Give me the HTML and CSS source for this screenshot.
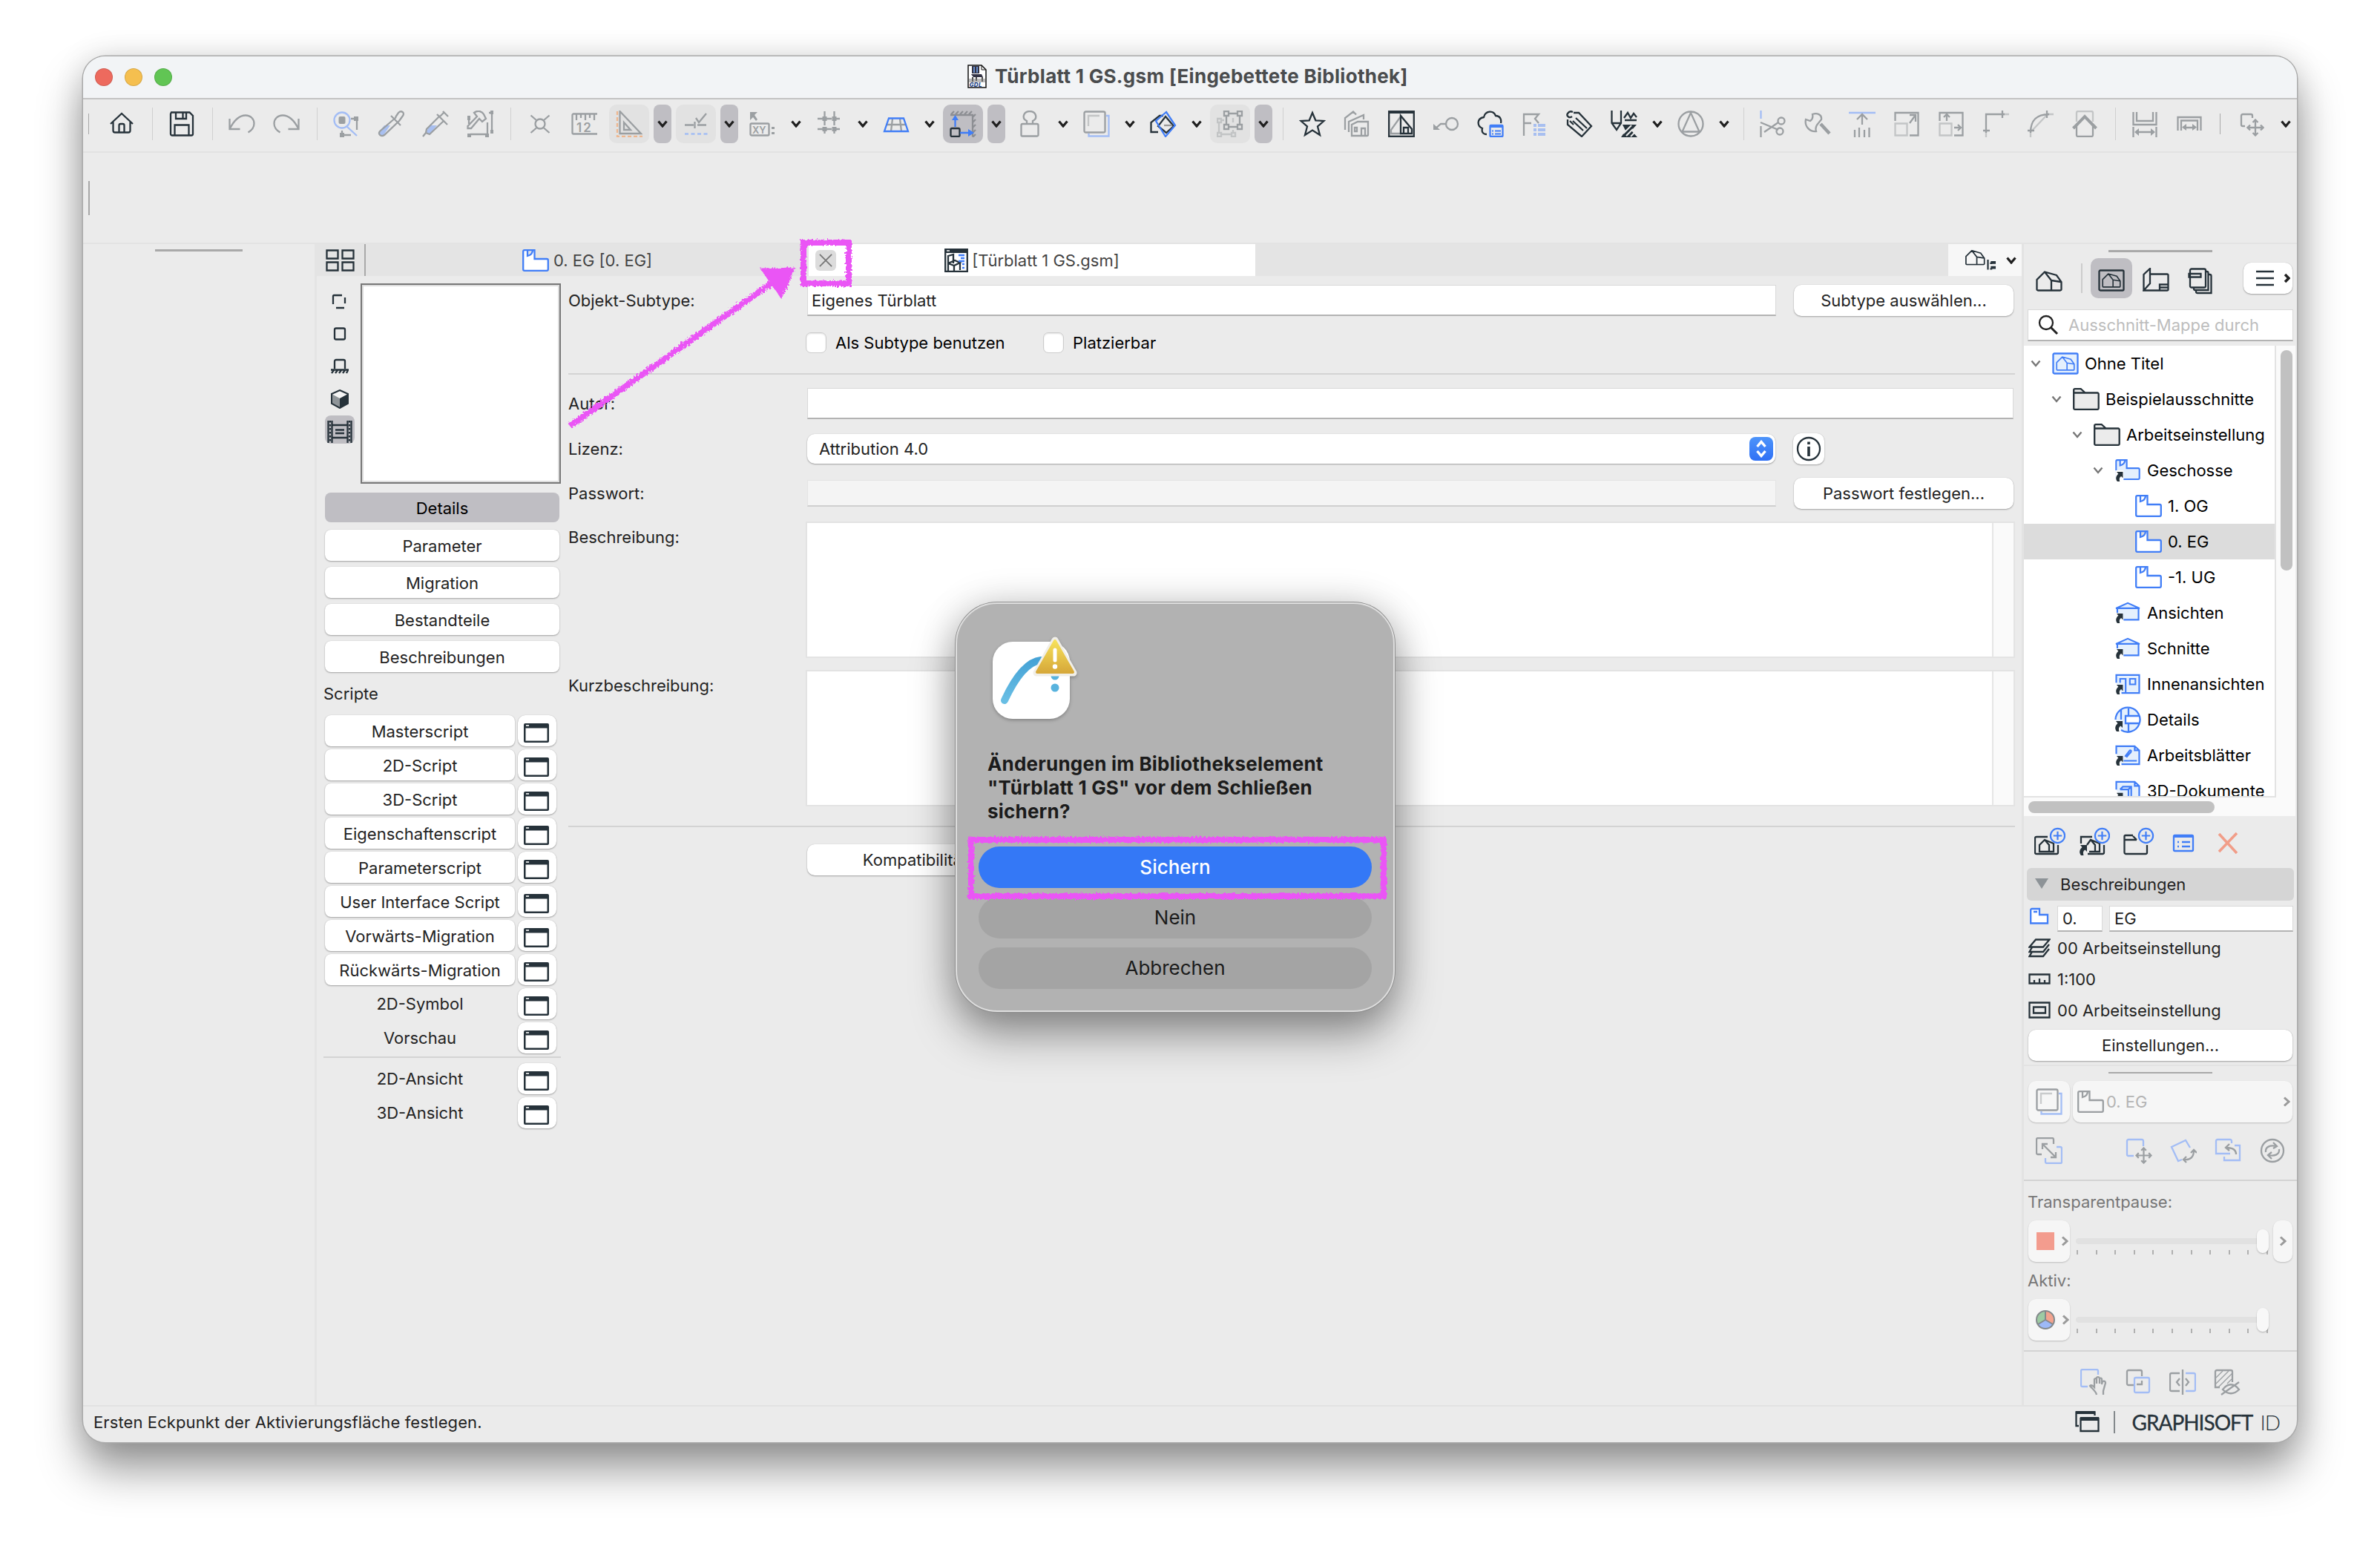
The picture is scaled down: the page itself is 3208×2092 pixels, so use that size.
FILE: index.html
```html
<!DOCTYPE html>
<html lang="de">
<head>
    <meta charset="UTF-8">
    <meta name="viewport" content="width=device-width, initial-scale=1.0">
    <title>Türblatt 1 GS.gsm [Eingebettete Bibliothek]</title>
    <link rel="stylesheet" href="styles.css">
</head>
<body>
    <!-- shared symbols -->
    <svg class="defs">
      <symbol id="down" viewBox="0 0 14 10"><path d="M1.500 1.500L7 8l5.500-6.500"/></symbol>
      <symbol id="win" viewBox="0 0 34 26"><rect class="fd" width="34" height="26" rx="2"/><path d="M2.500 6.500h29V23.500h-29z" fill="#fff"/><path d="M3 2.200h4v1.600H3z" fill="#fff"/></symbol>
      <symbol id="storey" viewBox="0 0 36 30"><path d="M1.200 3a1.800 1.800 0 0 1 1.800-1.800h13.500V13H33a1.800 1.800 0 0 1 1.800 1.800V27a1.800 1.800 0 0 1-1.800 1.800H3A1.800 1.800 0 0 1 1.200 27zM7 1v8c4-1 7-4 7-8"/></symbol>
      <symbol id="house" viewBox="0 0 36 28"><path d="M1.500 12v13a1.500 1.500 0 0 0 1.500 1.500h30a1.500 1.500 0 0 0 1.500-1.500V15L28 6 12 1.500zM12 1.500L21 13v13.500M21 13l13 2"/></symbol>
      <symbol id="link" viewBox="0 0 12 16"><path class="fd" d="M2 1h9v9L8.500 7.500C6 9 5.500 11 6.500 15H3C0 11 1 7 4.500 4z"/></symbol>
      <symbol id="folder" viewBox="0 0 36 30"><path fill="#ebebeb" d="M1.200 6.500h32a1.500 1.500 0 0 1 1.500 1.500v19.300a1.500 1.500 0 0 1-1.500 1.500h-30.500a1.500 1.500 0 0 1-1.500-1.500zM1.200 6.500V2.700a1.500 1.500 0 0 1 1.500-1.500h8l6 5.300"/></symbol>
      <symbol id="plus" viewBox="0 0 24 24"><circle cx="12" cy="12" r="10"/><path d="M12 6v12M6 12h12"/></symbol>
      <symbol id="layers" viewBox="0 0 36 36"><rect x="1.500" y="1.500" width="28" height="28" rx="2"/><path d="M7 21V7h15" opacity=".5"/><path class="lb" d="M31 7h3.500v27.500h-27V31"/></symbol>
      <symbol id="move4" viewBox="0 0 24 24"><path d="M12 2v20M2 12h20M8.500 5L12 1.500 15.500 5M8.500 19l3.500 3.500 3.500-3.500M5 8.500L1.500 12 5 15.500M19 8.500l3.500 3.500-3.500 3.500"/></symbol>
    </svg>

    <div class="window">
      <div class="titlebar">
        <div class="lights"><span class="red"></span><span class="yellow"></span><span class="green"></span></div>
        <div class="title">
          <svg width="26" height="32" viewBox="0 0 26 32"><path d="M1 1h18l6 6v24H1z" fill="#fff" stroke="#111" stroke-width="1.500"/><path d="M19 1v6h6" fill="none" stroke="#111"/><path d="M6 2h10v10H6zM5 13h14l2 4H8z" fill="#334"/><path d="M8 3h2v8H8zM12 3h2v8h-2z" fill="#678cc8"/><path d="M7 17v6M12 17v5M20 17v6" stroke="#111" stroke-width="1.500"/><path d="M2 19h22v5H2z" fill="#777" opacity=".5"/><text x="2.500" y="30" class="gdl">GDL</text></svg>
          <span>Türblatt 1 GS.gsm [Eingebettete Bibliothek]</span>
        </div>
      </div>

      <div class="toolbar">
        <i class="grip"></i>
        <div class="tool"><svg class="ic" viewBox="0 0 36 36"><path d="M3 18L18 4l15 14M6.500 15.500V27A2.500 2.500 0 0 0 9 29.500h18a2.500 2.500 0 0 0 2.500-2.500V15.500M14.500 29.500V20a2 2 0 0 1 2-2h3a2 2 0 0 1 2 2v9.500"/></svg></div>
        <i class="sep"></i>
        <div class="tool"><svg class="ic" viewBox="0 0 36 36"><path d="M4 2.500h24.500L33 7v24.500a2 2 0 0 1-2 2H5a2 2 0 0 1-2-2v-27zM10 3v8h14V3M19.500 3v7M8.500 33V19.500h19V33"/></svg></div>
        <i class="sep"></i>
        <div class="tool"><svg class="ic g" viewBox="0 0 36 36"><path d="M1.500 11v14h14M1.500 25C7 14 14 6.500 23 6.500c7 0 11.500 5 11.500 11 0 5-3 9-8 12"/></svg></div>
        <div class="tool"><svg class="ic g" viewBox="0 0 36 36"><path d="M34.500 11v14h-14M34.500 25C29 14 22 6.500 13 6.500c-7 0-11.500 5-11.500 11 0 5 3 9 8 12"/></svg></div>
        <i class="sep"></i>
        <div class="tool"><svg class="ic g" viewBox="0 0 36 36"><circle class="lb" cx="12" cy="13" r="10.500"/><path class="lb" d="M18 21l14 13"/><rect class="fg" x="7.500" y="8" width="9" height="10" rx="2"/><path d="M32 11v15M12 27v5M15 33h9M24 11h5"/><path class="fg" d="M28 8h6v6h-6zM9 30h6v6H9z"/></svg></div>
        <div class="tool"><svg class="ic g" viewBox="0 0 36 36"><path class="flb" d="M9 20l8 0-9 13c-4 3-8 0-6-4z"/><path d="M25 9L3 28c-3 4 2 8 6 5L29 14M18 7l13 13M24 9l4-6c4-4 9 0 6 4l-5 7"/></svg></div>
        <div class="tool"><svg class="ic g" viewBox="0 0 36 36"><path class="flb" d="M11 20h9L10 32l-5-3z"/><path d="M24 7L6 25l-1 5 5 2 19-18M20 5l14 14M28 1l7 7M24 8l6-6M5 30l-4 5"/></svg></div>
        <div class="tool"><svg class="ic g" viewBox="0 0 36 36"><path d="M10 3c5-4 11-2 13 2l3 6-5 4-4-4L6 24H1.500v-3L14 8zM28 16v16H5M34 4v24M30 3h3M3 10v8"/><path class="fg" d="M1 7h4v6H1zM32 0h4v5h-4zM32 26h4v5h-4zM1 31h5v5H1zM25 31h5v5h-5z"/></svg></div>
        <i class="sep"></i>
        <div class="tool"><svg class="ic g" viewBox="0 0 36 36"><circle cx="18" cy="18" r="6.500"/><path d="M5.500 6.500l8 7M30.500 6.500l-8 7M5.500 30l8-7M30.500 30l-8-7"/></svg></div>
        <div class="tool"><svg class="ic g" viewBox="0 0 36 36"><path d="M35 4.500H3A1.500 1.500 0 0 0 1.500 6v24A1.500 1.500 0 0 0 3 31.500h32M7 5v8M13 5v5M19 5v8M25 5v5M31 5v8"/><text class="t" x="7" y="29">12</text></svg></div>
        <div class="tool on1"><svg class="ic g" viewBox="0 0 36 36"><path d="M5.500 1v30H34zM11 16v10h9z"/><path d="M2 1v34h34" stroke="#eeb78f" stroke-dasharray="5 3"/></svg></div>
        <div class="dd on"><svg class="dn"><use href="#down"/></svg></div>
        <div class="tool on1"><svg class="ic g" viewBox="0 0 36 36"><path d="M3 19.500h12M20 19.500h12M16.500 15v9M18 10l4 6L32 4"/><path class="lb" d="M3 31.500h31" stroke-dasharray="5 3.500"/></svg></div>
        <div class="dd on"><svg class="dn"><use href="#down"/></svg></div>
        <div class="tool"><svg class="ic g" viewBox="0 0 36 36"><path class="fg" d="M1 2h10l-4 4 4 6-2 2-4-5-4 4z"/><rect x="1.500" y="17.500" width="25" height="16" rx="1.500"/><text class="t s" x="4" y="31">XY</text><path class="fg" d="M30 22h4v3h-4zM30 29h4v3h-4z"/></svg></div>
        <div class="dd"><svg class="dn"><use href="#down"/></svg></div>
        <div class="tool"><svg class="ic g" viewBox="0 0 36 36"><path d="M11.500 1v33M24.500 1v33M2 11h33M2 25h33" stroke-dasharray="8 3"/><path class="fg" d="M8.500 8h6v6h-6zM21.500 8h6v6h-6zM8.500 22h6v6h-6zM21.500 22h6v6h-6z"/></svg></div>
        <div class="dd"><svg class="dn"><use href="#down"/></svg></div>
        <div class="tool"><svg class="ic g" viewBox="0 0 36 36"><path d="M13 11l-2 17M23 11l2 17M4 19h28"/><path class="b" d="M8 10.500h20L34 28H2z"/></svg></div>
        <div class="dd"><svg class="dn"><use href="#down"/></svg></div>
        <div class="tool on"><svg class="ic g" viewBox="0 0 36 36"><path d="M2 5l4-4M8 5l4-4M14 5l4-4M20 5l4-4M26 5l4-4M31 9l4-4M31 16l4-4M31 23l4-4M31 30l4-4M31 36l4-4M1 6h30v29" stroke="#8d8f94"/><rect x="1.500" y="24" width="12" height="11" rx="1.500" stroke="#26323a"/><path class="b" d="M7.500 22V10M14 30h13"/><path class="fb" d="M3 13L7.500 6 12 13zM25 25l8 5-8 5z"/></svg></div>
        <div class="dd on"><svg class="dn"><use href="#down"/></svg></div>
        <div class="tool"><svg class="ic g" viewBox="0 0 36 36"><path d="M14 18v-4c-7-3-5-13 4-13s11 10 4 13v4M8 34.500h20a1.500 1.500 0 0 0 1.500-1.500V20a2 2 0 0 0-2-2h-19a2 2 0 0 0-2 2v13A1.500 1.500 0 0 0 8 34.500z"/></svg></div>
        <div class="dd"><svg class="dn"><use href="#down"/></svg></div>
        <div class="tool"><svg class="ic g" viewBox="0 0 36 36"><use href="#layers"/></svg></div>
        <div class="dd"><svg class="dn"><use href="#down"/></svg></div>
        <div class="tool"><svg class="ic" viewBox="0 0 36 36"><path d="M11 29H1.500V16L13 7h5M21 8l11 13-10 9-11-9z"/><path d="M19 20h11" stroke="#999"/><path class="b" d="M22 2L8 14l13 21 13-15z"/></svg></div>
        <div class="dd"><svg class="dn"><use href="#down"/></svg></div>
        <div class="tool on1"><svg class="ic g" viewBox="0 0 36 36"><path d="M10 1h6v6h-6zM28 1h6v6h-6zM10 19h6v6h-6zM28 19h6v6h-6zM16 4h12M16 22h12M13 7v12M31 7v12"/><path d="M1 11h5v5H1zM1 30h5v5H1zM20 30h5v5h-5zM6 32h14M3 16v14M22 10v6M22 26v4M6 13h4" opacity=".45"/></svg></div>
        <div class="dd on"><svg class="dn"><use href="#down"/></svg></div>
        <i class="sep"></i>
        <div class="tool"><svg class="ic" viewBox="0 0 36 36"><path d="M18 3l4.300 10.300L33.500 14l-8.500 7.500 3 11.500-10-6.500L8 33l3-11.500L2.500 14l11.200-.7z"/></svg></div>
        <div class="tool"><svg class="ic g" viewBox="0 0 36 36"><path d="M2 26V10L13 1.500l4 4M7 29V15l20-9v6M11 33V19l8-4h14v17.500a1.500 1.500 0 0 1-1.500 1.500H11zM24 34V24h5v10M15 23h3v5h-3z"/></svg></div>
        <div class="tool"><svg class="ic" viewBox="0 0 36 36"><rect x="1.200" y="1.200" width="33.600" height="33.600"/><path class="fd" d="M1 1h34v3H1z"/><path d="M17 8L4 26v5h13" stroke="#9b9fa2"/><path d="M17 31V7l15 18v6zM21 31v-8h6v8"/></svg></div>
        <div class="tool"><svg class="ic g" viewBox="0 0 36 36"><circle cx="26" cy="18" r="8"/><path d="M18 18h-7l-8 7"/><path class="fg" d="M1 18v8h9z"/></svg></div>
        <div class="tool"><svg class="ic" viewBox="0 0 36 36"><path d="M13 32c-6 0-7-4-6-8-7-3-8-13 2-15C11 0 22-1 25 7c6 0 8 5 7 10"/><rect class="b" x="17.500" y="20" width="17" height="15" rx="1"/><path class="fb" d="M17 19h18v4H17z"/><path class="b" d="M20 27.500h2M24 27.500h8M20 31.500h2M24 31.500h8" stroke-width="1.800"/></svg></div>
        <div class="tool"><svg class="ic g" viewBox="0 0 36 36"><path d="M3 34V5h20l-5 6 5 6M3 17h10"/><path class="flb" d="M16 18h4v4h-4zM22 18h10v4H22zM16 24h4v4h-4zM22 24h10v4H22zM16 30h4v4h-4zM22 30h10v4H22z"/></svg></div>
        <div class="tool"><svg class="ic" viewBox="0 0 36 36"><path d="M2 12v7l19 16 13-14L17 3h-7M8 8c-4 3-8-1-6-4s5-3 7-2M13 10l15 14M9 14l14 13M5 14l5 5"/></svg></div>
        <div class="tool"><svg class="ic" viewBox="0 0 36 36"><path d="M1.500 0v17L8 26l6-9V0M1.500 17H14M18 10l5-7 4 7 4-6 4 5M19 13h16"/><path class="fd" d="M16 19h19l-7 8 8 9H14l6-9z"/><path d="M17 31l11-11M21 34l9-9M27 35l5-5" stroke="#ebebeb" stroke-width="2"/></svg></div>
        <div class="dd"><svg class="dn"><use href="#down"/></svg></div>
        <div class="tool"><svg class="ic g" viewBox="0 0 36 36"><circle cx="18" cy="18" r="16.500"/><path d="M18 3L6.500 28.500h23z"/></svg></div>
        <div class="dd"><svg class="dn"><use href="#down"/></svg></div>
        <i class="sep"></i>
        <div class="tool"><svg class="ic g" viewBox="0 0 36 36"><path class="lb" d="M1.500 0v11"/><path d="M1.500 21v15M1 16l24 10M6 29l19-13"/><circle cx="29" cy="14" r="4.500"/><circle cx="27" cy="28" r="4.500"/></svg></div>
        <div class="tool"><svg class="ic g" viewBox="0 0 36 36"><path d="M11 5c6-2 13 0 12 7l-4 5c-4 4-4 8-3 11C8 29 0 22 2 12l6 2c3-2 4-5 3-9z"/><path d="M22 18l12 13" stroke-width="4.500"/></svg></div>
        <div class="tool"><svg class="ic g" viewBox="0 0 36 36"><path class="lb" d="M0 3h36"/><path d="M18 19V5M11 12l7-7 7 7M8 26v10M14 23v13M21 26v10M27.500 23v13"/></svg></div>
        <div class="tool"><svg class="ic g" viewBox="0 0 36 36"><path d="M2.500 14V3h31v30.500H22M22 17l8-11M22 6h8v9"/><path d="M2.500 17.500h16v16h-16z" opacity=".5"/></svg></div>
        <div class="tool"><svg class="ic g" viewBox="0 0 36 36"><path d="M2.500 14V3h31v30.500H22M12 14V5M8 9l4-4 4 4M22 23h9M27 19l4 4-4 4"/><path d="M2.500 17.500h16v16h-16z" opacity=".5"/></svg></div>
        <div class="tool"><svg class="ic g" viewBox="0 0 36 36"><path d="M5 30V5h25M1 27h9M27 0v10"/><path d="M5 28v8M28 5h8" opacity=".5"/></svg></div>
        <div class="tool"><svg class="ic g" viewBox="0 0 36 36"><path d="M5 30C5 14 12 5 30 5M1 27h9M27 0v10"/><path d="M5 28v8M28 5h8M7 27L27 6" opacity=".5"/></svg></div>
        <div class="tool"><svg class="ic g" viewBox="0 0 36 36"><path d="M7 15V3a2 2 0 0 1 2-2h18a2 2 0 0 1 2 2v12" opacity=".5"/><path d="M7 20v13a2 2 0 0 0 2 2h18a2 2 0 0 0 2-2V20"/><path d="M2.500 24L18 8l15.500 16" stroke-width="4"/></svg></div>
        <i class="sep"></i>
        <div class="tool"><svg class="ic g" viewBox="0 0 36 36"><path d="M2.500 2v17h31V2M7 2v12h22V2M2.500 22v14M33.500 22v14M6 29h24"/><path class="fg" d="M10 24v10l-6-5zM26 24v10l6-5z"/></svg></div>
        <div class="tool"><svg class="ic g" viewBox="0 0 36 36"><path d="M2.500 27V9h31v18M7 27V13.500h22V27M10 23h16"/><path class="fg" d="M14 18v9l-6-4.500zM22 18v9l6-4.500z"/></svg></div>
        <i class="grip last"></i>
        <div class="tool"><svg class="ic g" viewBox="0 0 36 36"><path d="M18 10V7a2 2 0 0 0-2-2H5a2 2 0 0 0-2 2v12a2 2 0 0 0 2 2h3"/><use href="#move4" x="10" y="11" width="24" height="24"/></svg></div>
        <div class="dd"><svg class="dn"><use href="#down"/></svg></div>
      </div>
      <div class="infobar"><i></i></div>

      <div class="main">
        <div class="toolbox"><i class="handle"></i></div>

        <div class="editor">
          <div class="tabs">
            <div class="tab-grid"><svg class="ic" viewBox="0 0 40 30"><path d="M1.500 1.500h15v11h-15zM22.500 1.500h15v11h-15zM1.500 17.500h15v11h-15zM22.500 17.500h15v11h-15z"/></svg></div>
            <div class="tab"><svg class="ic b storey"><use href="#storey"/></svg>0. EG [0. EG]</div>
            <div class="tab active">
              <span class="close"><svg class="ic" viewBox="0 0 20 20"><path d="M1 1l18 18M19 1L1 19"/></svg></span>
              <svg class="ic gsm" viewBox="0 0 32 32"><path d="M1.200 1.200h29.600v29.600H1.200z"/><path class="fd" d="M1 1h30v5H1z"/><path d="M3 3h4" stroke="#fff" stroke-width="1.500"/><path d="M5 30V10l7-2v12M5 20l8 3 8-4-7-3-9 4M13 23v7M21 19v10"/><path class="b" d="M19 9h8M22 13h5M19 17h8M24 21h3M24 26h3"/></svg>[Türblatt 1 GS.gsm]
            </div>
            <div class="tab-nav"><svg class="ic" viewBox="0 0 46 30"><use href="#house" x="1" y="0" width="30" height="22"/><path d="M34 14v14M37 19h3M37 27h3"/><path class="fd" d="M38 16h7v4h-7zM38 23h7v4h-7z"/></svg><svg class="dn"><use href="#down"/></svg></div>
          </div>

          <div class="editor-body">
            <div class="side">
              <div class="preview-row">
                <div class="modes">
                  <span><svg class="ic" viewBox="0 0 26 22"><path d="M4 15V4a1 1 0 0 1 1-1h11M20 6v8M8 20h11"/></svg></span>
                  <span><svg class="ic" viewBox="0 0 26 22"><rect x="6" y="3.500" width="14" height="15" rx="2"/></svg></span>
                  <span><svg class="ic" viewBox="0 0 26 22"><path d="M6 14V4a2 2 0 0 1 2-2h10a2 2 0 0 1 2 2v10M1 15.500h24M5 16l-3 4M10 16l-3 4M15 16l-3 4M20 16l-3 4M24 16l-2 4"/></svg></span>
                  <span><svg viewBox="0 0 26 26"><path fill="#f4f4f4" d="M13 1l11 5-11 6L2 6z"/><path fill="#8f9599" d="M2 6l11 6v13L2 19z"/><path fill="#26323a" d="M24 6v13l-11 6V12z"/><path fill="none" stroke="#26323a" stroke-width="2" d="M13 1l11 5v13l-11 6-11-6V6z"/></svg></span>
                  <span class="sel"><svg class="ic" viewBox="0 0 34 32"><path d="M1.500 1v30M6.500 1v30M27.500 1v30M32.500 1v30M6 7h22M6 24h22M11 13.500h12M11 18h12"/><path d="M4 1v30M30 1v30" stroke-dasharray="2.500 2.500"/></svg></span>
                </div>
                <div class="preview"></div>
              </div>
              <div class="btn big sel">Details</div>
              <div class="btn big">Parameter</div>
              <div class="btn big">Migration</div>
              <div class="btn big">Bestandteile</div>
              <div class="btn big">Beschreibungen</div>
              <div class="heading">Scripte</div>
              <div class="script"><div class="btn">Masterscript</div><div class="btn w"><svg><use href="#win"/></svg></div></div>
              <div class="script"><div class="btn">2D-Script</div><div class="btn w"><svg><use href="#win"/></svg></div></div>
              <div class="script"><div class="btn">3D-Script</div><div class="btn w"><svg><use href="#win"/></svg></div></div>
              <div class="script"><div class="btn">Eigenschaftenscript</div><div class="btn w"><svg><use href="#win"/></svg></div></div>
              <div class="script"><div class="btn">Parameterscript</div><div class="btn w"><svg><use href="#win"/></svg></div></div>
              <div class="script"><div class="btn">User Interface Script</div><div class="btn w"><svg><use href="#win"/></svg></div></div>
              <div class="script"><div class="btn">Vorwärts-Migration</div><div class="btn w"><svg><use href="#win"/></svg></div></div>
              <div class="script"><div class="btn">Rückwärts-Migration</div><div class="btn w"><svg><use href="#win"/></svg></div></div>
              <div class="script"><div class="plain">2D-Symbol</div><div class="btn w"><svg><use href="#win"/></svg></div></div>
              <div class="script"><div class="plain">Vorschau</div><div class="btn w"><svg><use href="#win"/></svg></div></div>
              <div class="line"></div>
              <div class="script"><div class="plain">2D-Ansicht</div><div class="btn w"><svg><use href="#win"/></svg></div></div>
              <div class="script"><div class="plain">3D-Ansicht</div><div class="btn w"><svg><use href="#win"/></svg></div></div>
            </div>

            <div class="form">
              <div class="row r1"><label>Objekt-Subtype:</label><div class="field">Eigenes Türblatt</div><div class="btn">Subtype auswählen...</div></div>
              <div class="checks"><span class="cb"></span><span class="cbt first">Als Subtype benutzen</span><span class="cb"></span><span class="cbt">Platzierbar</span></div>
              <div class="line"></div>
              <div class="row r2"><label>Autor:</label><div class="field full"></div></div>
              <div class="row r3"><label>Lizenz:</label><div class="btn select">Attribution 4.0<span class="stepper"><svg viewBox="0 0 16 24"><path d="M2.500 9L8 2.500 13.500 9M2.500 15L8 21.500l5.500-6.500"/></svg></span></div><div class="btn info"><svg class="ic" viewBox="0 0 34 34"><circle cx="17" cy="17" r="15"/><path d="M17 14v13M17 7.500v3.500" stroke-width="3.600"/></svg></div></div>
              <div class="row r4"><label>Passwort:</label><div class="field off"></div><div class="btn">Passwort festlegen...</div></div>
              <div class="row r5"><label>Beschreibung:</label><div class="area"><i></i></div></div>
              <div class="row r6"><label>Kurzbeschreibung:</label><div class="area"><i></i></div></div>
              <div class="line low"></div>
              <div class="btn compat">Kompatibilität...</div>
            </div>
          </div>
        </div>

        <div class="nav">
          <i class="handle"></i>
          <div class="nav-tabs">
            <svg class="ic n1"><use href="#house"/></svg>
            <i></i>
            <span class="sel"><svg class="ic" viewBox="0 0 36 30"><rect x="1.500" y="1.500" width="33" height="27" rx="1.500"/><use href="#house" x="4" y="5" width="28" height="20"/></svg></span>
            <svg class="ic n2" viewBox="0 0 36 32"><path d="M1.500 30V9L10 1v20L1.500 30.500H33a1.500 1.500 0 0 0 1.500-1.500V10A1.500 1.500 0 0 0 33 8.500H11M34 22.500H23V30M24 26.500h10"/></svg>
            <svg class="ic n3" viewBox="0 0 34 36"><rect x="3" y="1.500" width="21" height="25" rx="2"/><path d="M1.500 8h16v4.500h-16zM24 5h1.500a2 2 0 0 1 2 2v23H10a2 2 0 0 1-2-2v-1M28 9h1.500a2 2 0 0 1 2 2v23H13a2 2 0 0 1-2-2v-1"/></svg>
            <div class="btn menu"><svg class="ic" viewBox="0 0 46 22"><path d="M0 2h24M0 11h24M0 20h24"/><path d="M39 6l5 5-5 5" stroke-width="3.500" stroke="#222"/></svg></div>
          </div>
          <div class="search"><svg class="ic" viewBox="0 0 28 28"><circle cx="11" cy="11" r="9"/><path d="M17.500 17.500L26 26" stroke-width="3"/></svg><span>Ausschnitt-Mappe durch</span></div>

          <div class="tree-wrap">
            <div class="tree">
              <div class="item"><svg class="cv"><use href="#down"/></svg><svg class="ic b" viewBox="0 0 36 30"><rect x="1.500" y="1.500" width="33" height="27" rx="1.500" fill="#e5f0fd"/><use href="#house" x="4" y="5" width="28" height="20"/></svg>Ohne Titel</div>
              <div class="item l1"><svg class="cv"><use href="#down"/></svg><svg class="ic"><use href="#folder"/></svg>Beispielausschnitte</div>
              <div class="item l2"><svg class="cv"><use href="#down"/></svg><svg class="ic"><use href="#folder"/></svg>Arbeitseinstellung</div>
              <div class="item l3"><svg class="cv"><use href="#down"/></svg><svg class="ic b pale" viewBox="0 0 36 32"><use href="#storey" width="36" height="30"/><path d="M0 16h12v16H0z" stroke="none" fill="#fff"/><use href="#link" y="17" width="12" height="16"/></svg>Geschosse</div>
              <div class="item l4"><svg class="ic b"><use href="#storey"/></svg>1. OG</div>
              <div class="item l4 sel"><svg class="ic b wh"><use href="#storey"/></svg>0. EG</div>
              <div class="item l4"><svg class="ic b"><use href="#storey"/></svg>-1. UG</div>
              <div class="item l3x"><svg class="ic b pale" viewBox="0 0 36 32"><path d="M3 16V9.500h30.500V26H12M1 9.500L18 2l17 7.500z"/><use href="#link" y="16" width="12" height="16"/></svg>Ansichten</div>
              <div class="item l3x"><svg class="ic b pale" viewBox="0 0 36 32"><path d="M3 16V9.500h30.500V26H12M1 9.500L18 2l17 7.500z"/><use href="#link" y="16" width="12" height="16"/></svg>Schnitte</div>
              <div class="item l3x"><svg class="ic b pale" viewBox="0 0 36 32"><path d="M1.500 14V3h33v26H9M7 14V8.500h8V29M21 8.500h8v8h-8z"/><use href="#link" y="16" width="12" height="16"/></svg>Innenansichten</div>
              <div class="item l3x"><svg class="ic b pale det" viewBox="0 0 36 36"><path d="M1.500 18A16.500 16.500 0 1 1 9 32M19 2v11M19 23v12M34 13H15v10h19M9 5v13"/><use href="#link" y="19" width="12" height="16"/></svg>Details</div>
              <div class="item l3x"><svg class="ic b pale" viewBox="0 0 36 32"><path d="M1.500 14V3H28l6.500 6v20H9M28 3v6h6.500M12 24h19M14 18l7-9c3-1 2 3 0 4l-5 6"/><use href="#link" y="16" width="12" height="16"/></svg>Arbeitsblätter</div>
              <div class="item l3x"><svg class="ic b pale" viewBox="0 0 36 32"><path d="M1.500 14V3H28l6.500 6v20H9M28 3v6h6.500M7 14h12v15M7 14l4-4h12v16M19 14l4-4"/><use href="#link" y="18" width="12" height="16"/></svg>3D-Dokumente</div>
            </div>
            <div class="vscroll"><i></i></div>
          </div>
          <div class="hscroll"><i></i></div>

          <div class="actions">
            <span><svg class="ic" viewBox="0 0 42 38"><path d="M18 13H3a2 2 0 0 0-2 2v19a2 2 0 0 0 2 2h27a2 2 0 0 0 2-2V24"/><path d="M7 33V24l7-7 12 5v11zM14 17l6 7v9"/><use class="b" href="#plus" x="20" y="0" width="23" height="23"/></svg></span>
            <span><svg class="ic" viewBox="0 0 42 38"><path d="M18 13H3v9M12 36h20a2 2 0 0 0 2-2V24"/><path d="M11 24l5-7 12 5v11H14M16 17l6 7v9"/><use href="#link" y="23" width="12" height="16"/><use class="b" href="#plus" x="20" y="0" width="23" height="23"/></svg></span>
            <span><svg class="ic" viewBox="0 0 42 38"><path d="M18 17H1.500M13 12l5 5M13 11H3a1.500 1.500 0 0 0-1.500 1.500V34A2 2 0 0 0 3 36h27a2 2 0 0 0 2-2V24"/><use class="b" href="#plus" x="19" y="0" width="23" height="23"/></svg></span>
            <span><svg class="ic b" viewBox="0 0 42 38"><rect x="8" y="11" width="26" height="21" rx="1.500"/><path class="fb" d="M8 10h26v4H8z"/><path d="M13 20h2M19 20h11M13 26h2M19 26h11"/></svg></span>
            <span><svg class="ic" viewBox="0 0 42 38"><path d="M9 9l24 26M33 8L9 33" stroke="#f19d88" stroke-width="3.500"/></svg></span>
          </div>

          <div class="section"><b></b>Beschreibungen</div>
          <div class="idrow"><svg class="ic b" viewBox="0 0 26 22"><path fill="#fff" d="M1.200 2.500a1.500 1.500 0 0 1 1.500-1.500H13v8h11v11.500H1.200zM5 5h5"/></svg><div class="field num">0.</div><div class="field">EG</div></div>
          <div class="prop"><svg class="ic" viewBox="0 0 30 26"><path d="M10 1.500h18.500l-8.500 10H1.500zM5 12l-3.500 6H20l8-10M5 18l-3.500 6H20l8-10"/></svg>00 Arbeitseinstellung</div>
          <div class="prop"><svg class="ic" viewBox="0 0 30 26"><path d="M1.500 6.500h27v12h-27zM8 18v-4M15 18v-6M22 18v-4"/></svg>1:100</div>
          <div class="prop"><svg class="ic" viewBox="0 0 30 26"><path d="M1.500 2.500h27v20h-27zM7 8.500h16v8H7z"/></svg>00 Arbeitseinstellung</div>
          <div class="btn settings">Einstellungen...</div>

          <div class="trace">
            <i class="handle"></i>
            <div class="ref"><div class="btn off"><svg class="ic g"><use href="#layers"/></svg></div><div class="btn off wide"><svg class="ic g st"><use href="#storey"/></svg>0. EG<svg class="rt" viewBox="0 0 10 14"><path d="M2 1.500L8 7l-6 5.500"/></svg></div></div>
            <div class="icons">
              <svg class="ic g" viewBox="0 0 36 36"><path d="M8 23H3a2 2 0 0 1-2-2V3a2 2 0 0 1 2-2h19a2 2 0 0 1 2 2v6M9 9l18 18M9 16V9h7M20 27h7v-7"/><path class="lb" d="M28 13h5a2 2 0 0 1 2 2v18a2 2 0 0 1-2 2H15a2 2 0 0 1-2-2v-5"/></svg>
              <i></i>
              <svg class="ic g" viewBox="0 0 36 36"><path class="lb" d="M24 12V5a2 2 0 0 0-2-2H4a2 2 0 0 0-2 2v18a2 2 0 0 0 2 2h7"/><use href="#move4" x="13" y="13" width="23" height="23"/></svg>
              <svg class="ic g" viewBox="0 0 36 36"><path class="lb" d="M27 14l-6-10L2 13l9 19 5-2"/><path d="M19 30c9 1 13-4 13-12M28 21l4-4 4 4M22 26l-4 4 4 4"/></svg>
              <svg class="ic g" viewBox="0 0 36 36"><path class="lb" d="M23 8V5a2 2 0 0 0-2-2H4a2 2 0 0 0-2 2v17h19M27 11h7v20H13v-5"/><path d="M29 23c0-7-6-9-13-9M20 9l-5 5 5 4"/></svg>
              <svg class="ic g" viewBox="0 0 36 36"><circle cx="18" cy="18" r="15"/><path d="M9 20c-1-7 6-10 14-8M19 7l5 5-5 3M27 16c1 7-6 10-14 8M17 20l-5 4 5 5"/></svg>
            </div>
            <div class="line"></div>
            <div class="cap">Transparentpause:</div>
            <div class="slide"><div class="btn off"><b class="sw"></b><svg class="rt" viewBox="0 0 10 14"><path d="M2 1.500L8 7l-6 5.500"/></svg></div><div class="slider"><div class="track"></div><div class="ticks"><i></i><i></i><i></i><i></i><i></i><i></i><i></i><i></i><i></i><i></i><i></i></div><div class="knob"></div></div><div class="btn off nar"><svg class="rt" viewBox="0 0 10 14"><path d="M2 1.500L8 7l-6 5.500"/></svg></div></div>
            <div class="cap c2">Aktiv:</div>
            <div class="slide"><div class="btn off"><svg class="pie" viewBox="0 0 26 26"><path fill="#f3a38e" d="M13 13V1a12 12 0 0 1 10.400 18z"/><path fill="#9dcba3" d="M13 13V1A12 12 0 0 0 2.600 19z"/><path fill="#9db9f7" d="M13 13L2.600 19a12 12 0 0 0 20.800 0z"/><path d="M13 1v12M13 13l10 6M13 13L3 19" stroke="#84898c" stroke-width="2"/><circle cx="13" cy="13" r="12" fill="none" stroke="#84898c" stroke-width="2"/></svg><svg class="rt" viewBox="0 0 10 14"><path d="M2 1.500L8 7l-6 5.500"/></svg></div><div class="slider"><div class="track"></div><div class="ticks"><i></i><i></i><i></i><i></i><i></i><i></i><i></i><i></i><i></i><i></i><i></i></div><div class="knob"></div></div></div>
            <div class="line l2"></div>
            <div class="icons bottom">
              <svg class="ic g" viewBox="0 0 36 36"><path class="lb" d="M24 8V3a2 2 0 0 0-2-2H3a2 2 0 0 0-2 2v19a2 2 0 0 0 2 2h7"/><path d="M22 35c-1-5-6-8-9-12 2-2 4 0 6 2V14c2-2 3 0 3 1v5-8c2-2 4 0 4 1v7-7c2-1 3 0 3 1v7l1-4c2-1 4 0 4 2l-3 11v5"/></svg>
              <svg class="ic g" viewBox="0 0 36 36"><path d="M14 22H5a2 2 0 0 1-2-2V4a2 2 0 0 1 2-2h16a2 2 0 0 1 2 2v6M23 16v5h-7"/><rect class="lb" x="13" y="12" width="20" height="20" rx="2"/></svg>
              <svg class="ic g" viewBox="0 0 36 36"><path d="M18 1v34M14 6H3a2 2 0 0 0-2 2v20a2 2 0 0 0 2 2h11M14 13l-4 5 4 5M22 13l4 5-4 5"/><path class="lb" d="M22 6h11a2 2 0 0 1 2 2v20a2 2 0 0 1-2 2H22"/></svg>
              <svg class="ic g" viewBox="0 0 36 36"><path d="M25 18V4a2 2 0 0 0-2-2H4a2 2 0 0 0-2 2v21h6M12 28c7-9 15-9 22 0-7 7-15 7-22 0zM10 35l24-17"/><path d="M3 12L12 3M3 20L20 3M6 25L25 6M18 20l6-6" stroke-width="1.300"/></svg>
            </div>
          </div>
        </div>
      </div>

      <div class="status">
        <span>Ersten Eckpunkt der Aktivierungsfläche festlegen.</span>
        <div class="brand"><svg class="ic" viewBox="0 0 34 30"><path d="M5 20H1.500V1.500h25V6M7.500 10h24v17h-24z"/><path class="fd" d="M1 0h26v4H1zM7 8h25v5H7z"/></svg><i></i><b>GRAPHISOFT</b><em>ID</em></div>
      </div>

      <div class="dialog">
        <svg class="appicon" viewBox="0 0 118 116">
          <defs>
            <linearGradient id="warn" x1="0" y1="0" x2="0" y2="1"><stop offset="0" stop-color="#f6e05a"/><stop offset="1" stop-color="#d7a93a"/></linearGradient>
            <linearGradient id="arc" x1="0" y1="0" x2="0" y2="1"><stop offset="0" stop-color="#46a3d6"/><stop offset="1" stop-color="#68bee4"/></linearGradient>
          </defs>
          <rect x="1" y="7" width="104" height="104" rx="27" fill="#fff"/>
          <path d="M17 86C30 58 46 34 66 32" fill="none" stroke="url(#arc)" stroke-width="10" stroke-linecap="round"/>
          <circle cx="85" cy="53" r="5.500" fill="#58b3de"/><circle cx="85" cy="69" r="5.500" fill="#58b3de"/>
          <path d="M85 5L110 49H60z" fill="url(#warn)" stroke="#f1efe9" stroke-width="9" stroke-linejoin="round"/>
          <path d="M85 6L109 48H61z" fill="url(#warn)" stroke="url(#warn)" stroke-width="4" stroke-linejoin="round"/>
          <path d="M85 18v14" stroke="#fff" stroke-width="5" stroke-linecap="round"/><circle cx="85" cy="40.500" r="3.200" fill="#fff"/>
        </svg>
        <p>Änderungen im Bibliothekselement<br>"Türblatt 1 GS" vor dem Schließen<br>sichern?</p>
        <div class="dbtn primary">Sichern</div>
        <div class="dbtn">Nein</div>
        <div class="dbtn">Abbrechen</div>
      </div>
    </div>

    <!-- crayon marks over the window -->
    <svg class="marks" viewBox="0 0 3208 2092">
      <filter id="crayon" x="-5%" y="-5%" width="110%" height="110%"><feTurbulence type="fractalNoise" baseFrequency=".35" numOctaves="2" result="n"/><feDisplacementMap in="SourceGraphic" in2="n" scale="6"/></filter>
      <g filter="url(#crayon)">
        <rect x="1083" y="327" width="61" height="55"/>
        <rect x="1309" y="1132" width="556" height="76"/>
        <path d="M768 574L1048 376"/>
        <path class="head" d="M1027 363l43-1-17 38z"/>
      </g>
    </svg>
</body>
</html>
```
FILE: styles.css
```css
* {
  box-sizing: border-box;
}

body {
  margin: 0;
  width: 3208px;
  height: 2092px;
  overflow: hidden;
  background: #fff;
  font-family: Inter, "Liberation Sans", sans-serif;
  font-size: 22px;
  color: #232323;
  padding: 76px 112px 0;
}

.defs {
  position: absolute;
  width: 0;
  height: 0;
}

.window {
  position: relative;
  display: flex;
  flex-direction: column;
  width: 2984px;
  height: 1868px;
  background: #ebebeb;
  border-radius: 30px;
  box-shadow: 0 0 0 1.5px #aaa, 0 36px 60px rgba(0, 0, 0, 0.42), 0 0 40px rgba(0, 0, 0, 0.12);
}

/* icons */
.ic {
  fill: none;
  stroke: #26323a;
  stroke-width: 2.3;
  width: 36px;
  height: 36px;
  flex: none;
}
.g { stroke: #9b9fa2; }
.b { stroke: #417ef7; }
.lb { stroke: #a3bdf5; }
.fd { fill: #26323a; stroke: none; }
.fg { fill: #9b9fa2; stroke: none; }
.fb { fill: #417ef7; stroke: none; }
.flb { fill: #a8bff0; stroke: none; }
.t { fill: #9b9fa2; stroke: none; font-size: 17px; letter-spacing: 2px; font-weight: 600; }
.t.s { font-size: 13px; letter-spacing: 0; }
.gdl { font-size: 8px; font-weight: 800; font-style: italic; fill: #1d4487; }

.dn {
  width: 14px;
  height: 10px;
  fill: none;
  stroke: #1f1f1f;
  stroke-width: 3.2;
}

/* title bar */
.titlebar {
  display: flex;
  align-items: center;
  height: 56px;
  padding-left: 16px;
  background: #f2f4f6;
  border-radius: 30px 30px 0 0;
}
.lights { display: flex; gap: 16px; }
.lights span { width: 24px; height: 24px; border-radius: 50%; border: 1px solid rgba(0, 0, 0, 0.12); }
.red { background: #ed6a5e; }
.yellow { background: #f5bf4f; }
.green { background: #61c554; }
.title {
  display: flex;
  gap: 11px;
  align-items: center;
  margin-left: 1072px;
  padding-bottom: 3px;
  font-size: 26px;
  font-weight: 700;
  letter-spacing: 0.3px;
  color: #4a4c4e;
  white-space: nowrap;
}

/* toolbar */
.toolbar {
  display: flex;
  align-items: center;
  height: 74px;
  border-top: 2px solid #c4c4c4;
  border-bottom: 2px solid #e2e2e2;
  padding-bottom: 5px;
}
.tool {
  display: flex;
  align-items: center;
  justify-content: center;
  width: 54px;
  height: 52px;
  margin: 0 3px;
  border-radius: 10px;
  flex: none;
}
.dd {
  display: flex;
  align-items: center;
  justify-content: center;
  width: 24px;
  height: 52px;
  margin: 0 3px;
  border-radius: 8px;
  flex: none;
}
.on { background: #bfbec3; }
.on1 { background: #e2e2e2; }
.sep { width: 2px; height: 44px; margin: 0 9px 0 11px; background: #d0d0d0; }
.grip { width: 2px; height: 28px; margin: 0 14px 0 7px; background: #a8a8a8; }
.grip.last { margin: 0 13px 0 11px; }

.infobar { height: 123px; border-bottom: 2px solid #e3e3e3; padding: 38px 0 0 7px; }
.infobar i { display: block; width: 2px; height: 46px; background: #a8a8a8; }

.main { display: flex; height: 1567px; border-bottom: 2px solid #e2e2e2; }
.toolbox { width: 312px; }
.handle { display: block; height: 3px; background: #a9a9a9; }
.toolbox .handle { width: 118px; margin: 7px 0 0 97px; }

/* editor */
.editor { width: 2301px; border-left: 3px solid #e4e4e4; }
.tabs { display: flex; height: 43px; background: #e4e4e4; color: #444; }
.tab-grid { width: 66px; padding: 7px 0 0 12px; border-right: 2px solid #a9a9a9; }
.tab-grid .ic { display: block; width: 40px; height: 30px; }
.tab {
  display: flex;
  align-items: center;
  justify-content: center;
  gap: 6px;
  width: 597px;
  position: relative;
}
.tab.active { width: 602px; background: #fff; gap: 5px; }
.tab .storey { width: 36px; height: 30px; fill: #fff; }
.tab .gsm { width: 32px; height: 32px; }
.close {
  position: absolute;
  left: 9px;
  top: 8px;
  width: 28px;
  height: 28px;
  padding: 5px;
  border-radius: 6px;
  background: #dcdcdc;
  display: flex;
}
.close .ic { width: 18px; height: 18px; stroke: #777; stroke-width: 2; }
.tab-nav {
  display: flex;
  align-items: center;
  gap: 13px;
  margin-left: auto;
  width: 99px;
  padding-left: 21px;
  background: #f7f7f7;
}
.tab-nav .ic { width: 44px; height: 30px; }

.editor-body { display: flex; }
.side { width: 320px; margin: 10px 0 0 9px; padding-left: 2px; }
.preview-row { display: flex; gap: 8px; }
.modes { width: 40px; padding-top: 2px; }
.modes span { display: flex; align-items: center; justify-content: center; height: 44px; border-radius: 8px; }
.modes svg { width: 26px; height: 26px; }
.modes .sel { background: #bfbec3; height: 38px; }
.modes .sel svg { width: 34px; height: 32px; margin-top: 5px; }
.preview { width: 270px; height: 270px; background: #fff; border: 2px solid #777; box-shadow: inset 0 0 0 2px #ddd; }

.btn {
  display: flex;
  align-items: center;
  justify-content: center;
  height: 42px;
  background: #fff;
  border-radius: 10px;
  box-shadow: 0 1px 2px rgba(0, 0, 0, 0.3), 0 0 1px rgba(0, 0, 0, 0.2);
  white-space: nowrap;
}
.side .btn { padding-top: 1px; }
.btn.big { width: 316px; border-radius: 8px; margin-top: 8px; }
.btn.big.sel { margin: 12px 0 10px; height: 40px; background: #bfbec3; color: #000; box-shadow: none; }
.btn.big.sel + .big { margin-top: 0; }
.heading { margin: 14px 0 0 -2px; height: 44px; line-height: 30px; }
.script { display: flex; gap: 4px; margin-bottom: 4px; }
.script .btn { width: 256px; border-radius: 8px; }
.script .plain { width: 256px; height: 42px; line-height: 42px; text-align: center; }
.script .btn.w { width: 52px; border-radius: 10px; }
.btn.w svg { width: 34px; height: 26px; margin: 4px 2px 0 0; }
.line { height: 2px; background: #d3d3d3; }
.side .line { margin: 1px 0 7px -2px; }

/* form */
.form { width: 1950px; margin: 12px 0 0 10px; }
.row { display: flex; }
.row label { width: 322px; line-height: 42px; }
.row > .btn { width: 296px; margin-left: 24px; }
.field {
  width: 1306px;
  height: 42px;
  line-height: 40px;
  padding-left: 5px;
  background: #fff;
  border: 1px solid #d9d9d9;
  border-bottom: 2px solid #b3b3b3;
}
.field.full { width: 1626px; }
.field.off { height: 36px; margin-top: 3px; background: #f4f4f4; border-color: #e4e4e4 #e4e4e4 #cfcfcf; }
.checks { display: flex; align-items: center; height: 28px; margin: 22px 0 27px 320px; color: #000; }
.cb { width: 28px; height: 28px; background: #fff; border: 1px solid #ccc; border-radius: 7px; box-shadow: inset 0 1px 2px rgba(0, 0, 0, 0.12); }
.cbt { margin-left: 12px; }
.cbt.first { width: 280px; }
.r2 { margin-top: 18px; }
.r3 { margin-top: 19px; }
.r4 { margin-top: 18px; }
.r5 { margin-top: 17px; height: 184px; }
.r6 { margin-top: 16px; height: 184px; }
.row > .select { width: 1305px; margin: 1px 0 0; height: 40px; padding: 0 3px 0 16px; justify-content: space-between; }
.stepper { display: flex; align-items: center; justify-content: center; width: 32px; height: 32px; border-radius: 8px; background: linear-gradient(#4d94fa, #2f70f5); }
.stepper svg { width: 16px; height: 24px; fill: none; stroke: #fff; stroke-width: 3.4; }
.row > .info { width: 42px; margin-left: 24px; }
.info .ic { width: 34px; height: 34px; }
.area { width: 1630px; height: 184px; margin-left: -2px; background: #fff; border: 2px solid #e3e3e3; display: flex; justify-content: flex-end; }
.area i { width: 29px; background: #fafafa; border-left: 2px solid #e6e6e6; }
.low { margin-top: 26px; }
.compat { width: 310px; margin: 23px 0 0 322px; }

/* navigator */
.nav { width: 371px; border-left: 3px solid #e3e3e3; }
.nav > .handle { width: 140px; margin: 8px 0 0 114px; }
.nav-tabs { display: flex; align-items: center; height: 54px; margin-top: 8px; padding-left: 16px; }
.nav-tabs > i { width: 2px; height: 40px; margin: 0 11px 0 25px; background: #ccc; }
.nav-tabs .sel { display: flex; align-items: center; justify-content: center; width: 56px; height: 54px; border-radius: 10px; background: #bfbec3; }
.nav-tabs .sel .ic { height: 30px; margin-top: 6px; }
.n1 { height: 28px; margin-top: 8px; }
.n2 { height: 32px; margin: 3px 25px 0 14px; }
.n3 { width: 34px; margin-top: 8px; }
.menu { width: 66px; margin-left: 41px; }
.menu .ic { width: 46px; height: 22px; margin-left: 14px; }
.search {
  display: flex;
  align-items: center;
  width: 358px;
  height: 43px;
  margin: 15px 0 0 5px;
  padding-left: 13px;
  background: #fff;
  border: 1px solid #d9d9d9;
  border-bottom: 2px solid #b3b3b3;
  color: #bdbdbd;
}
.search .ic { width: 28px; height: 28px; stroke: #222; }
.search span { margin-left: 13px; width: 257px; overflow: hidden; white-space: nowrap; }

.tree-wrap { display: flex; height: 609px; margin-top: 6px; }
.tree { width: 340px; height: 609px; overflow: hidden; background: #fff; border-right: 2px solid #e3e3e3; border-bottom: 2px solid #e3e3e3; color: #000; }
.item { display: flex; align-items: center; height: 48px; padding-left: 8px; white-space: nowrap; }
.item .cv { width: 16px; height: 10px; margin-right: 14px; fill: none; stroke: #777; stroke-width: 2.4; }
.item .ic { height: 30px; margin-right: 8px; }
.item .det { height: 36px; }
.l1 { padding-left: 36px; }
.l2 { padding-left: 64px; }
.l3 { padding-left: 92px; }
.l3x { padding-left: 122px; }
.l4 { padding-left: 150px; }
.item.sel { background: #dcdcdc; }
.pale { fill: #e5f0fd; }
.wh { fill: #fff; }
.vscroll { width: 26px; background: #fafafa; padding: 6px 0 0 6px; }
.vscroll i { display: block; width: 16px; height: 297px; border-radius: 8px; background: #c1c1c1; }
.hscroll { width: 366px; height: 25px; background: #fafafa; padding: 5px 0 0 6px; }
.hscroll i { display: block; width: 251px; height: 16px; border-radius: 8px; background: #c1c1c1; }

.actions { display: flex; height: 70px; padding: 15px 0 0 5px; }
.actions span { width: 60px; display: flex; justify-content: center; }
.actions .ic { width: 42px; height: 38px; }
.section { display: flex; align-items: center; width: 360px; height: 44px; margin-left: 4px; padding-left: 11px; border-radius: 6px; background: #d5d5d5; }
.section b { margin-right: 16px; border: 9px solid transparent; border-top: 14px solid #8d9397; border-bottom: 0; margin-top: -2px; }
.idrow { display: flex; margin: 7px 0 1px 8px; height: 35px; }
.idrow .ic { width: 26px; height: 24px; margin: 2px 11px 0 0; }
.idrow .field { width: 248px; height: 35px; line-height: 33px; padding-left: 6px; }
.idrow .num { width: 61px; margin-right: 9px; }
.prop { display: flex; align-items: center; height: 42px; padding-left: 6px; }
.prop .ic { width: 30px; height: 26px; margin-right: 9px; }
.settings { width: 356px; margin: 5px 0 0 6px; }

.trace { margin-top: 5px; border-top: 2px solid #e3e3e3; color: #777; }
.trace .handle { width: 140px; margin: 8px 0 0 114px; height: 2px; }
.btn.off { background: #f6f6f6; height: 56px; width: 56px; box-shadow: 0 1px 2px rgba(0, 0, 0, 0.2); }
.ref { display: flex; gap: 4px; margin: 10px 0 0 6px; }
.ref .wide { width: 296px; justify-content: flex-start; padding: 0 3px 0 6px; gap: 3px; color: #b4b4b4; }
.st { height: 30px; }
.rt { width: 10px; height: 14px; fill: none; stroke: #9a9a9a; stroke-width: 3; }
.wide .rt { margin-left: auto; }
.icons { display: flex; margin: 20px 0 0 16px; gap: 24px; }
.icons i { width: 37px; }
.trace .line { margin-top: 21px; }
.cap { height: 53px; padding-left: 5px; line-height: 56px; }
.slide { display: flex; height: 56px; margin-left: 6px; }
.slide .btn.off { gap: 9px; padding-left: 9px; }
.slide .btn.nar { width: 26px; padding: 0; margin-left: 6px; }
.sw { width: 24px; height: 24px; background: #f39c8e; }
.pie { width: 26px; height: 26px; }
.slider { position: relative; width: 268px; padding: 24px 8px 0; }
.track { height: 8px; width: 250px; border-radius: 4px; background: #e1e1e1; }
.ticks { display: flex; justify-content: space-between; width: 258px; margin: 8px 0 0 1px; }
.ticks i { width: 2px; height: 6px; background: #b0b0b0; }
.knob { position: absolute; left: 252px; top: 12px; width: 16px; height: 32px; border-radius: 8px; background: #f8f8f8; box-shadow: 0 1px 2px rgba(0, 0, 0, 0.25); }
.c2 { height: 50px; line-height: 50px; }
.trace .l2 { margin-top: 13px; }
.icons.bottom { margin: 23px 0 0 76px; }

/* status bar */
.status { display: flex; justify-content: space-between; align-items: center; flex: 1; padding: 0 23px 7px 14px; letter-spacing: 0.1px; }
.brand { display: flex; align-items: center; font-family: Lato, sans-serif; font-size: 28px; color: #26323a; }
.brand .ic { width: 34px; height: 30px; }
.brand i { width: 2px; height: 30px; margin: 0 22px 0 18px; background: #84898c; }
.brand b { font-weight: 400; letter-spacing: -1px; -webkit-text-stroke: 0.3px #26323a; }
.brand em { font-style: normal; font-weight: 300; margin-left: 10px; letter-spacing: -1px; }

/* save prompt */
.dialog {
  position: absolute;
  left: 1176px;
  top: 736px;
  width: 592px;
  height: 552px;
  padding: 44px 29px 0;
  border-radius: 56px;
  background: #b2b2b2;
  border: 2px solid #dedede;
  box-shadow: 0 0 0 1px #8f8f8f, 0 30px 60px rgba(0, 0, 0, 0.4), 0 0 50px rgba(0, 0, 0, 0.15);
  color: #1b1b1b;
  font-size: 26px;
}
.appicon { display: block; width: 118px; height: 116px; margin-left: 18px; filter: drop-shadow(0 2px 2px rgba(0, 0, 0, 0.25)); }
.dialog p { margin: 40px 0 31px 12px; line-height: 32px; font-weight: 700; white-space: nowrap; letter-spacing: 0.2px; }
.dbtn { width: 530px; height: 56px; margin-bottom: 12px; border-radius: 28px; background: #a4a4a4; line-height: 56px; text-align: center; }
.dbtn.primary { background: #3478f6; color: #fff; font-weight: 500; }

.marks { position: absolute; left: 0; top: 0; width: 3208px; height: 2092px; fill: none; stroke: #ea55f5; stroke-width: 8; }
.marks .head { fill: #ea55f5; stroke-width: 3; }
```
